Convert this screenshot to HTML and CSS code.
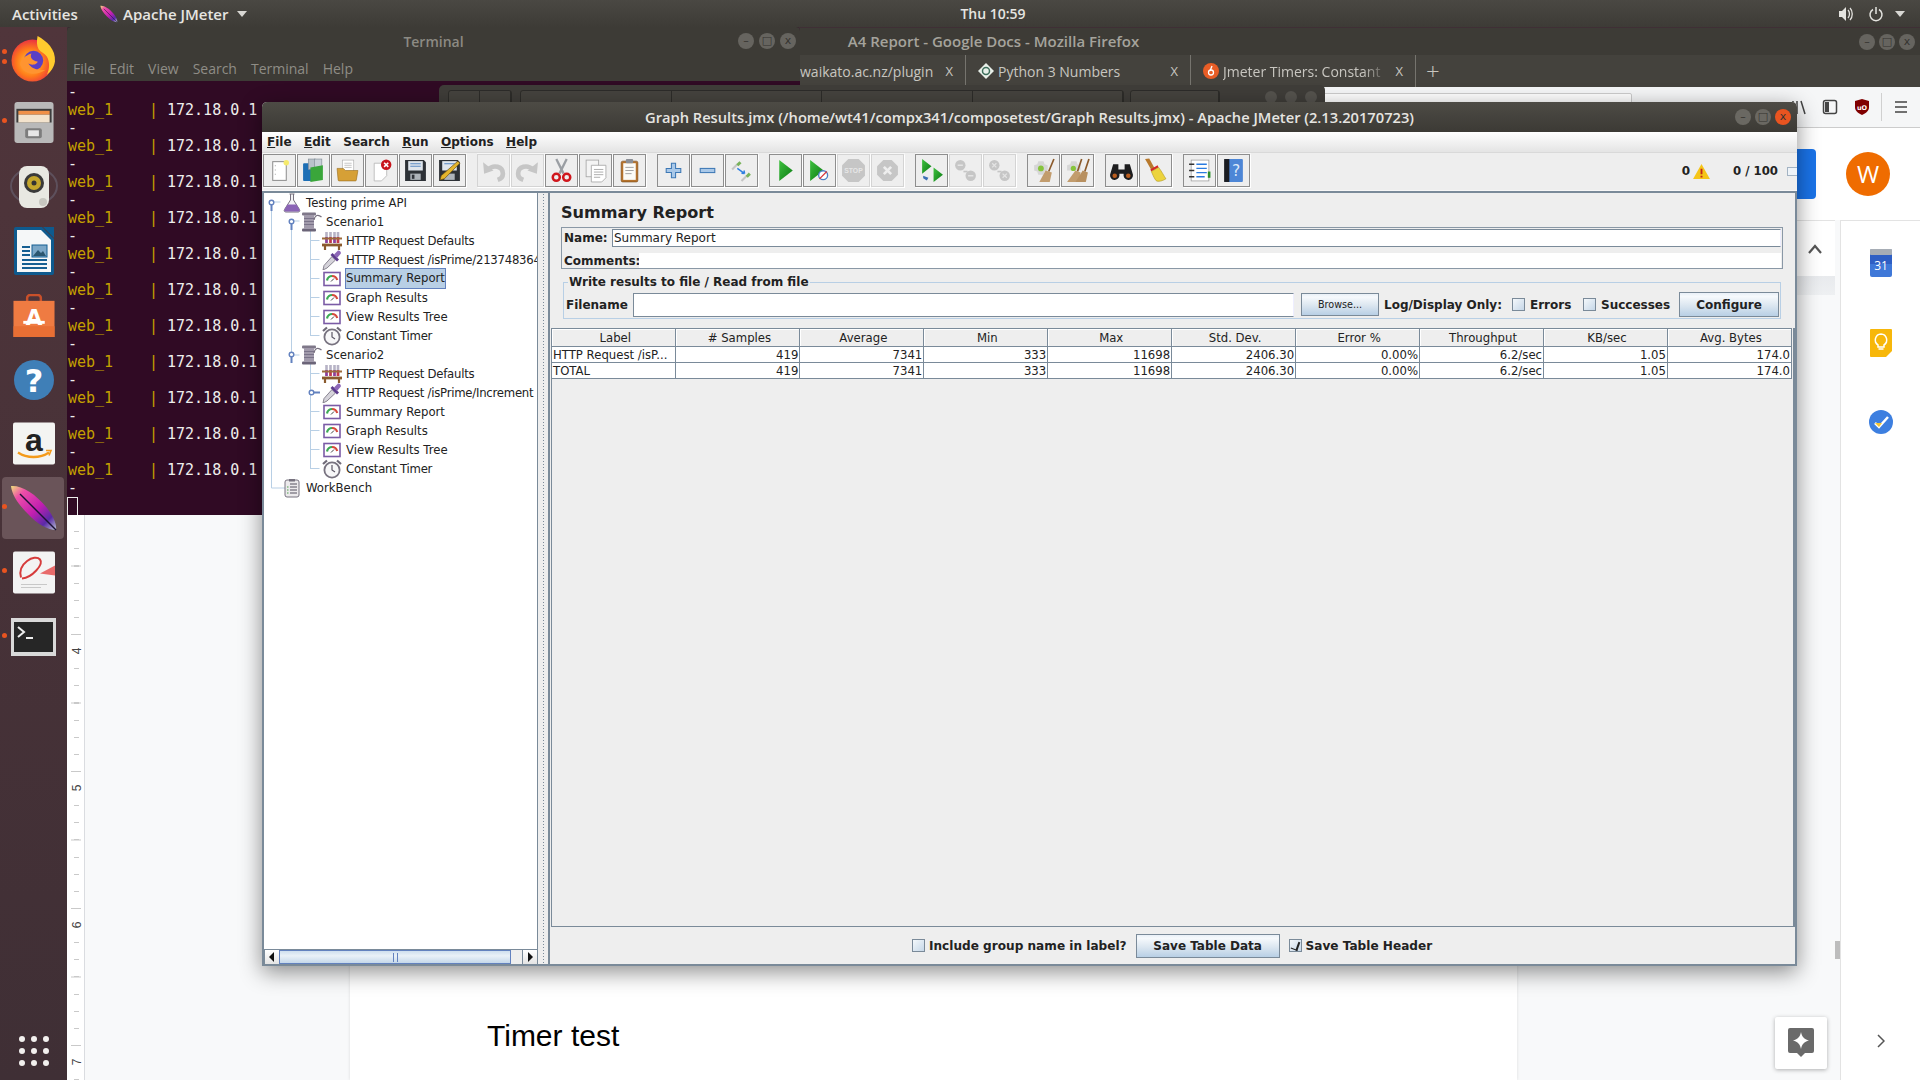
FILE: index.html
```html
<!DOCTYPE html>
<html lang="en">
<head>
  <meta charset="UTF-8" />
  <title>Graph Results.jmx - Apache JMeter</title>
  <link rel="stylesheet" href="styles.css">
</head>
<body>
  <svg class="defs" xmlns="http://www.w3.org/2000/svg">
    <defs>
      <linearGradient id="g-green" x1="0" y1="0" x2="1" y2="1"><stop offset="0" stop-color="#3fc13f"/><stop offset="1" stop-color="#0a7a12"/></linearGradient>
      <linearGradient id="g-feather" x1="0" y1="0" x2="1" y2="1"><stop offset="0" stop-color="#efe27a"/><stop offset=".2" stop-color="#ee4fa8"/><stop offset=".55" stop-color="#c21fb0"/><stop offset=".8" stop-color="#5a2aa8"/><stop offset="1" stop-color="#b9c3cf"/></linearGradient>
      <radialGradient id="g-fox" cx=".45" cy=".55" r=".6"><stop offset="0" stop-color="#ffd23a"/><stop offset=".55" stop-color="#ff7a1a"/><stop offset="1" stop-color="#e5234a"/></radialGradient>

      <symbol id="feather" viewBox="0 0 48 48">
        <path d="M1 2C11 1 25 9 37 24C43 32 47 40 46 46C38 46 27 40 18 30C8 20 2 11 1 2Z" fill="url(#g-feather)"/>
        <path d="M10 10L46 46" stroke="#1a1033" stroke-width="1.4"/>
      </symbol>

      <symbol id="tr-flask" viewBox="0 0 20 20">
        <path d="M7.500 1h5M8.500 1v6L2.500 16.500c-.8 1.500 0 2.500 1.500 2.500h12c1.500 0 2.300-1 1.500-2.500L11.500 7V1" fill="#f3f3f5" stroke="#77727f" stroke-width="1"/>
        <path d="M5.500 11.500h9L17.500 16.600c.6 1.200 0 2-1.200 2H3.700c-1.200 0-1.800-.8-1.200-2Z" fill="#8a63b5"/>
      </symbol>
      <symbol id="tr-spool" viewBox="0 0 20 20">
        <rect x="0" y="0.500" width="14" height="3" rx="1" fill="#7f7889"/>
        <rect x="0" y="16.500" width="14" height="3" rx="1" fill="#6b6478"/>
        <rect x="2" y="3" width="10" height="14" fill="#a19aab"/>
        <path d="M2 6.500h10M2 9.500h10M2 12.500h10" stroke="#7a7389" stroke-width="1"/>
        <path d="M12 8C13 3 16 2 19.500 5" fill="none" stroke="#77707f" stroke-width="1.200"/>
      </symbol>
      <symbol id="tr-rack" viewBox="0 0 20 20">
        <path d="M4.500 1v11M8.500 1v11M12.500 1v11M16 1v11" stroke="#b7b3c6" stroke-width="2.600"/>
        <path d="M4.500 6v6M12.500 6v6" stroke="#8e3f9e" stroke-width="2.600"/>
        <path d="M8.500 6v6M16 6v6" stroke="#c5384a" stroke-width="2.600"/>
        <path d="M0 7.500h20" stroke="#9c6b3c" stroke-width="2"/>
        <path d="M0 14h20" stroke="#8a5a2e" stroke-width="2.800"/>
        <path d="M3 14v5M17 14v5" stroke="#8a5a2e" stroke-width="2.200"/>
      </symbol>
      <symbol id="tr-pipette" viewBox="0 0 20 20">
        <path d="M1 20l1-4.500 8-9 3.500 3.500-8.500 8Z" fill="#d5d3da" stroke="#6f6a78" stroke-width=".8"/>
        <path d="M8.500 5l6.500 6.500 2-2L10.500 3Z" fill="#5d3b8c"/>
        <path d="M12 4.500l3.500-3.500c1.500-1.500 4.500 1.500 3 3L15 8Z" fill="#8e68b8"/>
      </symbol>
      <symbol id="tr-gauge" viewBox="0 0 20 20">
        <rect x="2" y="3.500" width="16" height="13" fill="#fff" stroke="#7b5ba6" stroke-width="1.600"/>
        <path d="M5 11.500C5.500 8.500 8 7 10 7" fill="none" stroke="#3caa55" stroke-width="2.200"/>
        <path d="M10 7C13 7 14.500 8.500 15.200 11" fill="none" stroke="#d6493a" stroke-width="2.200"/>
        <path d="M9 12.500L12 9.500" stroke="#444" stroke-width="1"/>
      </symbol>
      <symbol id="tr-clock" viewBox="0 0 20 20">
        <path d="M1 5l4-3.500M19 5l-4-3.500" stroke="#6f6a78" stroke-width="2.200"/>
        <circle cx="10" cy="11" r="7.600" fill="#f7f7f8" stroke="#77727f" stroke-width="1.800"/>
        <path d="M10 6v5l3 2" fill="none" stroke="#5c5766" stroke-width="1.200"/>
      </symbol>
      <symbol id="tr-bench" viewBox="0 0 20 20">
        <rect x="3" y="2" width="14" height="17" rx="2" fill="#eceaec" stroke="#77727f" stroke-width="1"/>
        <rect x="7" y="1" width="6" height="2.500" fill="#77727f"/>
        <path d="M8 6h7M8 9h7M8 12h7M8 15h7" stroke="#55505f" stroke-width="1"/>
        <path d="M5 9h1.500M5 12h1.500M5 15h1.500" stroke="#4aa04a" stroke-width="1.200"/>
      </symbol>

      <symbol id="t-new" viewBox="0 0 24 24">
        <rect x="5.500" y="3.500" width="13" height="18" fill="#fff" stroke="#8f8f8f"/>
        <path d="M8 7v1M8 11v1M8 15v1" stroke="#aaa"/>
        <circle cx="18.500" cy="4.500" r="2.600" fill="#f5ea6b"/>
      </symbol>
      <symbol id="t-books" viewBox="0 0 24 24">
        <rect x="2" y="5" width="8" height="17" rx="1" fill="#1d6fb5"/>
        <rect x="7" y="1" width="7" height="10" fill="#b9c2c9" stroke="#7f8a94" stroke-width=".6"/>
        <rect x="13" y="1" width="7" height="10" fill="#c8d0d6" stroke="#7f8a94" stroke-width=".6"/>
        <path d="M9 9l12-2v14l-12 2Z" fill="#3aa63a"/>
      </symbol>
      <symbol id="t-folder" viewBox="0 0 24 24">
        <rect x="7" y="2" width="11" height="13" fill="#fff" stroke="#aaa" stroke-width=".6"/>
        <path d="M9 5h7M9 7h7M9 9h7" stroke="#bbb" stroke-width=".8"/>
        <path d="M2 10h6l2 2h12l-1.500 9a1 1 0 0 1-1 1H4a1 1 0 0 1-1-1Z" fill="#d6a036" stroke="#9a6e1f" stroke-width=".6"/>
      </symbol>
      <symbol id="t-close" viewBox="0 0 24 24">
        <path d="M5 5h12v12l-5 5H5Z" fill="#fff" stroke="#b5b5b5" stroke-width=".8"/>
        <circle cx="16.500" cy="6.500" r="5" fill="#c8151b"/>
        <path d="M14.500 4.500l4 4M18.500 4.500l-4 4" stroke="#fff" stroke-width="1.500"/>
      </symbol>
      <symbol id="t-save" viewBox="0 0 24 24">
        <path d="M2 2h18l2 2v18H2Z" fill="#2d3136"/>
        <rect x="5" y="3" width="14" height="9" fill="#dfe5ec"/>
        <path d="M7 5.500h10M7 8h10" stroke="#5b8ac2" stroke-width="1"/>
        <rect x="7" y="15" width="10" height="6" fill="#aeb4ba"/>
        <rect x="8.500" y="16" width="2.500" height="4" fill="#30343a"/>
      </symbol>
      <symbol id="t-saveas" viewBox="0 0 24 24">
        <path d="M2 2h18l2 2v18H2Z" fill="#2d3136"/>
        <rect x="5" y="3" width="14" height="9" fill="#dfe5ec"/>
        <path d="M7 5.500h10" stroke="#5b8ac2" stroke-width="1"/>
        <rect x="7" y="15" width="10" height="6" fill="#aeb4ba"/>
        <path d="M20 3l2 2L7 20l-4 1 1-4Z" fill="#e4b52c" stroke="#6e5413" stroke-width=".7"/>
      </symbol>
      <symbol id="t-undo" viewBox="0 0 24 24">
        <path d="M7 11c5-5 14-3 14 4 0 3-2 5-5 6" fill="none" stroke="#c6c6c6" stroke-width="4.500"/>
        <path d="M2 4l1 11 9-3Z" fill="#c6c6c6"/>
      </symbol>
      <symbol id="t-redo" viewBox="0 0 24 24">
        <path d="M17 11c-5-5-14-3-14 4 0 3 2 5 5 6" fill="none" stroke="#c6c6c6" stroke-width="4.500"/>
        <path d="M22 4l-1 11-9-3Z" fill="#c6c6c6"/>
      </symbol>
      <symbol id="t-cut" viewBox="0 0 24 24">
        <path d="M7 1l7 14M17 1l-7 14" stroke="#9a9ea3" stroke-width="2.200"/>
        <circle cx="7" cy="18.500" r="3.400" fill="none" stroke="#d0161c" stroke-width="2.400"/>
        <circle cx="17" cy="18.500" r="3.400" fill="none" stroke="#d0161c" stroke-width="2.400"/>
      </symbol>
      <symbol id="t-copy" viewBox="0 0 24 24">
        <rect x="3" y="2" width="12" height="16" fill="#f4f4f4" stroke="#a5a5a5" stroke-width=".8"/>
        <path d="M8 7h14v12l-4 4H8Z" fill="#fff" stroke="#a5a5a5" stroke-width=".8"/>
        <path d="M10.500 11h9M10.500 13.500h9M10.500 16h9M10.500 18.500h6" stroke="#a8a8a8" stroke-width=".9"/>
      </symbol>
      <symbol id="t-paste" viewBox="0 0 24 24">
        <rect x="4" y="3" width="16" height="20" rx="1.500" fill="#b5732c" stroke="#7a4a18" stroke-width=".6"/>
        <rect x="6" y="5" width="12" height="16" fill="#fbfbf7"/>
        <rect x="8.500" y="1" width="7" height="4" rx="1" fill="#8b8f96"/>
        <path d="M8 9h8M8 12h8M8 15h6" stroke="#9d9d9d" stroke-width=".9"/>
      </symbol>
      <symbol id="t-plus" viewBox="0 0 24 24">
        <path d="M10 5h4v5h5v4h-5v5h-4v-5H5v-4h5Z" fill="#a9c8e8" stroke="#3d78b5" stroke-width="1"/>
      </symbol>
      <symbol id="t-minus" viewBox="0 0 24 24">
        <rect x="5" y="10" width="14" height="4" fill="#a9c8e8" stroke="#3d78b5" stroke-width="1"/>
      </symbol>
      <symbol id="t-toggle" viewBox="0 0 24 24">
        <path d="M3 11l5-5" stroke="#c5c5c5" stroke-width="2"/>
        <path d="M7 6l3-3 2 2-3 3Z" fill="#79b25b"/>
        <path d="M12 22l5-5" stroke="#c5c5c5" stroke-width="2"/>
        <path d="M16 17l3-3 2 2-3 3Z" fill="#79b25b"/>
        <path d="M8 10l7 5M15 15l-3-.4M15 15l-.6-3" fill="none" stroke="#2f7fe0" stroke-width="1.400"/>
      </symbol>
      <symbol id="t-play" viewBox="0 0 24 24">
        <path d="M6 2l13 10L6 22Z" fill="url(#g-green)"/>
      </symbol>
      <symbol id="t-playno" viewBox="0 0 24 24">
        <path d="M3 2l13 10L3 22Z" fill="url(#g-green)"/>
        <circle cx="15.500" cy="16.500" r="4.300" fill="#fff" stroke="#4c7fc4" stroke-width="1.300"/>
        <path d="M12 20l7-7" stroke="#d8353a" stroke-width="1.200"/>
      </symbol>
      <symbol id="t-stop" viewBox="0 0 24 24">
        <path d="M7 1h10l6 6v10l-6 6H7l-6-6V7Z" fill="#c6c6c6"/>
        <text x="12" y="14.500" class="stop-word">STOP</text>
      </symbol>
      <symbol id="t-shut" viewBox="0 0 24 24">
        <path d="M8 2h8l6 6v8l-6 6H8l-6-6V8Z" fill="#c6c6c6"/>
        <path d="M8.500 8.500l7 7M15.500 8.500l-7 7" stroke="#eee" stroke-width="2.600"/>
      </symbol>
      <symbol id="t-remote" viewBox="0 0 24 24">
        <path d="M3 1l9 7-9 7Z" fill="url(#g-green)"/>
        <path d="M14 9l9 7-9 7Z" fill="url(#g-green)"/>
        <path d="M4 17l5 2-1.500 2.500L4 19.500Z" fill="#3d6fb5"/>
      </symbol>
      <symbol id="t-rstop" viewBox="0 0 24 24">
        <circle cx="7" cy="7" r="5" fill="#c6c6c6"/>
        <circle cx="17" cy="17" r="5" fill="#c6c6c6"/>
        <path d="M10 13h4" stroke="#c6c6c6" stroke-width="1.600"/>
        <path d="M4.500 7h5M14.500 17h5" stroke="#e4e4e4" stroke-width="1.400"/>
      </symbol>
      <symbol id="t-rshut" viewBox="0 0 24 24">
        <circle cx="7" cy="7" r="5" fill="#c6c6c6"/>
        <circle cx="17" cy="17" r="5" fill="#c6c6c6"/>
        <path d="M10 13h4" stroke="#c6c6c6" stroke-width="1.600"/>
        <path d="M5 5l4 4M9 5l-4 4M15 15l4 4M19 15l-4 4" stroke="#e4e4e4" stroke-width="1.200"/>
      </symbol>
      <symbol id="t-clear" viewBox="0 0 24 24">
        <path d="M3 7l3-1 1-3h5l1 3 3 1v5l-3 1-1 3H7l-1-3-3-1Z" fill="#d6d6d6"/>
        <circle cx="9.500" cy="10" r="2.800" fill="#86c43c"/>
        <path d="M22 1l-5 12" stroke="#8b5a2b" stroke-width="1.600"/>
        <path d="M14 12l6 2-2 9H8Z" fill="#c29c6d"/>
      </symbol>
      <symbol id="t-clearall" viewBox="0 0 24 24">
        <path d="M2 7l3-1 1-3h5l1 3 3 1v5H2Z" fill="#d6d6d6"/>
        <circle cx="8" cy="10" r="2.500" fill="#86c43c"/>
        <path d="M16 1l-4 12M23 1l-4 12" stroke="#8b5a2b" stroke-width="1.600"/>
        <path d="M10 12l5 2-2 9H2Z" fill="#c29c6d"/>
        <path d="M17 12l5 2-2 9H10Z" fill="#b89060"/>
      </symbol>
      <symbol id="t-bino" viewBox="0 0 24 24">
        <path d="M4 6h5v5h6V6h5l3 10a4.500 4.500 0 1 1-9 1v-2h-4v2a4.500 4.500 0 1 1-9-1Z" fill="#1d1d1f"/>
        <circle cx="5.500" cy="17" r="2.200" fill="#b85c1e"/>
        <circle cx="18.500" cy="17" r="2.200" fill="#b85c1e"/>
      </symbol>
      <symbol id="t-broom" viewBox="0 0 24 24">
        <path d="M2 1l4-.5 5 9-3 2Z" fill="#b8792c"/>
        <path d="M7 11l7-4 1 2-7 4Z" fill="#d6252a"/>
        <path d="M8 13l7-4c3 4 5 8 7 11-5 3-9 3-10 1-2-3-3-6-4-8Z" fill="#ecd33d" stroke="#b39a1c" stroke-width=".6"/>
      </symbol>
      <symbol id="t-func" viewBox="0 0 24 24">
        <rect x="4" y="2" width="17" height="20" fill="#fff" stroke="#9a9a9a" stroke-width=".7"/>
        <path d="M9 6h10M9 10h10M9 14h10M9 18h8" stroke="#2a7be0" stroke-width="1.300"/>
        <path d="M2 6h5M2 12h5M2 18h5" stroke="#333" stroke-width="1.600"/>
        <rect x="20" y="13" width="2.500" height="6" fill="#2d8f2d"/>
      </symbol>
      <symbol id="t-help" viewBox="0 0 24 24">
        <rect x="4" y="1" width="17" height="22" rx="1" fill="#4d86d6"/>
        <rect x="3" y="1" width="5" height="22" fill="#1b1d22"/>
        <text x="14.500" y="17" class="help-mark">?</text>
      </symbol>

      <symbol id="d-firefox" viewBox="0 0 44 46">
        <circle cx="21" cy="25" r="20.500" fill="url(#g-fox)"/>
        <path d="M26 1c9 5 18 13 17 25-1 6-4 10-8 13 3-6 3-13 0-18-2-3-6-4-8-7-2-4-2-8-1-13Z" fill="#ffcb2e"/>
        <circle cx="22" cy="25" r="9.500" fill="#5b3fc4"/>
        <path d="M9 29c3 9 15 12 25 5-8 1-14-1-17-6 3 2 9 1 9-2-5-1-8-4-6-8-6 2-11 6-11 11Z" fill="#ff9430"/>
      </symbol>
      <symbol id="d-files" viewBox="0 0 42 44">
        <rect x="1" y="1" width="40" height="42" rx="3" fill="#b9b9b9"/>
        <rect x="3" y="8" width="36" height="14" fill="#3c3c3c"/>
        <rect x="5" y="10" width="32" height="4" fill="#f09048"/>
        <rect x="5" y="14" width="32" height="8" fill="#f3e3cd"/>
        <rect x="12" y="28" width="17" height="10" rx="2" fill="#7d7d7d"/>
        <rect x="15" y="30" width="11" height="6" fill="#e7e7e7"/>
      </symbol>
      <symbol id="d-speaker" viewBox="0 0 48 44">
        <ellipse cx="24" cy="21" rx="23" ry="18" fill="none" stroke="#6d6b7d" stroke-width="2" stroke-opacity=".5"/>
        <rect x="9" y="1" width="30" height="42" rx="8" fill="#e8e8e2"/>
        <circle cx="24" cy="18" r="10" fill="#3a3a3a"/>
        <circle cx="24" cy="18" r="7" fill="#c4a62c"/>
        <circle cx="24" cy="18" r="2.500" fill="#333"/>
        <circle cx="33" cy="37" r="4" fill="#c7c7c0"/>
      </symbol>
      <symbol id="d-writer" viewBox="0 0 40 48">
        <path d="M2 0h26l12 12v34a2 2 0 0 1-2 2H2a2 2 0 0 1-2-2V2a2 2 0 0 1 2-2Z" fill="#0e5a8e"/>
        <path d="M3 3h24l10 10v32H3Z" fill="#f5f7f8"/>
        <path d="M29 0h11v11Z" fill="#0e5a8e"/>
        <path d="M8 20h8M8 24h8M8 28h8M8 33h25M8 37h25M8 41h25" stroke="#155f92" stroke-width="2"/>
        <rect x="18" y="18" width="15" height="12" fill="#7ba7c7" stroke="#155f92"/>
        <path d="M19 29l5-6 3 3 2-2 3 5Z" fill="#2b566f"/>
      </symbol>
      <symbol id="d-store" viewBox="0 0 42 44">
        <path d="M14 9V4a3 3 0 0 1 3-3h8a3 3 0 0 1 3 3v5" fill="none" stroke="#c9502a" stroke-width="2.500"/>
        <rect x="0" y="7" width="42" height="37" fill="#ef7b42"/>
        <rect x="0" y="33" width="42" height="11" fill="#e86f34"/>
        <text x="21" y="32" class="store-mark">A</text>
        <path d="M10 29h22" stroke="#fff" stroke-width="3"/>
      </symbol>
      <symbol id="d-help" viewBox="0 0 40 40">
        <circle cx="20" cy="20" r="20" fill="#3f7fb7"/>
        <text x="20" y="32" class="help-big">?</text>
      </symbol>
      <symbol id="d-amazon" viewBox="0 0 42 42">
        <rect x="0" y="0" width="42" height="42" rx="2" fill="#f4f4f2"/>
        <text x="21" y="28" class="amazon-mark">a</text>
        <path d="M5 30c9 6 22 6 31 0" fill="none" stroke="#f49a1a" stroke-width="2.400"/>
        <path d="M33 28l5 0-2 5" fill="none" stroke="#f49a1a" stroke-width="1.600"/>
      </symbol>
      <symbol id="d-evince" viewBox="0 0 42 42">
        <path d="M2 0h38a2 2 0 0 1 2 2v38a2 2 0 0 1-2 2H2a2 2 0 0 1-2-2V2a2 2 0 0 1 2-2Z" fill="#f3f3f3"/>
        <path d="M8 26C4 12 22 2 27 8c4 5-8 18-18 19" fill="none" stroke="#d63b3b" stroke-width="2"/>
        <path d="M27 22l15-8v10Z" fill="#e86a6a"/>
        <path d="M8 33h26M8 36h20" stroke="#c8c8c8" stroke-width="1.200"/>
      </symbol>
      <symbol id="d-term" viewBox="0 0 45 38">
        <rect x="0" y="0" width="45" height="38" fill="#d9d9d9"/>
        <rect x="3" y="4" width="39" height="30" fill="#262626"/>
        <path d="M7 9l6 5-6 5" fill="none" stroke="#eee" stroke-width="2"/>
        <path d="M15 20h7" stroke="#eee" stroke-width="2"/>
      </symbol>
    </defs>
  </svg>

  <div class="desktop">
    <header class="topbar">
      <div class="topbar-left">
        <span class="activities">Activities</span>
        <svg class="app-feather"><use href="#feather"/></svg>
        <span class="app-name">Apache JMeter</span>
        <span class="caret"></span>
      </div>
      <div class="clock">Thu 10:59</div>
      <div class="topbar-right">
        <svg class="tray-ico" viewBox="0 0 16 16"><path d="M1 5h3l4-4v14l-4-4H1Z" fill="#e4e3df"/><path d="M10 4c2 2 2 6 0 8M12 2c3 3 3 9 0 12" fill="none" stroke="#e4e3df" stroke-width="1.300"/></svg>
        <svg class="tray-ico" viewBox="0 0 16 16"><path d="M5 3.500a6 6 0 1 0 6 0M8 1v7" fill="none" stroke="#e4e3df" stroke-width="1.500"/></svg>
        <span class="caret caret-tray"></span>
      </div>
    </header>

    <nav class="dock">
      <div class="dock-slot"><i class="pip pip-two"></i><i class="pip"></i><svg class="ico-firefox"><use href="#d-firefox"/></svg></div>
      <div class="dock-slot"><i class="pip"></i><svg class="ico-42"><use href="#d-files"/></svg></div>
      <div class="dock-slot"><svg class="ico-speaker"><use href="#d-speaker"/></svg></div>
      <div class="dock-slot"><svg class="ico-writer"><use href="#d-writer"/></svg></div>
      <div class="dock-slot"><svg class="ico-42"><use href="#d-store"/></svg></div>
      <div class="dock-slot"><svg class="ico-help"><use href="#d-help"/></svg></div>
      <div class="dock-slot"><svg class="ico-42"><use href="#d-amazon"/></svg></div>
      <div class="dock-slot dock-slot-on"><i class="pip"></i><svg class="ico-jmeter"><use href="#feather"/></svg></div>
      <div class="dock-slot"><i class="pip"></i><svg class="ico-42"><use href="#d-evince"/></svg></div>
      <div class="dock-slot"><i class="pip"></i><svg class="ico-term"><use href="#d-term"/></svg></div>
      <div class="app-grid">
        <i></i><i></i><i></i><i></i><i></i><i></i><i></i><i></i><i></i>
      </div>
    </nav>

    <!-- firefox behind everything -->
    <section class="win firefox">
      <div class="ff-title">
        <span>A4 Report - Google Docs - Mozilla Firefox</span>
        <div class="win-btns win-btns-ff"><b>&#8211;</b><b>&#9633;</b><b>x</b></div>
      </div>
      <div class="ff-tabs">
        <div class="ff-tab"><span class="ff-tab-text ff-tab-first">waikato.ac.nz/plugin</span><em>X</em></div>
        <div class="ff-tab">
          <svg class="favicon" viewBox="0 0 16 16"><path d="M8 0l8 8-8 8-8-8Z" fill="#e8efe9"/><circle cx="8" cy="8" r="3.500" fill="none" stroke="#3d6e5b" stroke-width="1.500"/></svg>
          <span class="ff-tab-text">Python 3 Numbers</span><em>X</em>
        </div>
        <div class="ff-tab">
          <svg class="favicon" viewBox="0 0 16 16"><circle cx="8" cy="8" r="8" fill="#e85d26"/><circle cx="8" cy="9.500" r="2.500" fill="none" stroke="#fff" stroke-width="1.300"/><path d="M9 3L7 8" stroke="#fff" stroke-width="1.300"/></svg>
          <span class="ff-tab-text ff-tab-fade">Jmeter Timers: Constant</span><em>X</em>
        </div>
        <div class="ff-new">+</div>
      </div>
      <div class="ff-nav">
        <div class="ff-url"></div>
        <svg class="nav-lib" viewBox="0 0 16 16"><path d="M2 2v13M6 2v13M10 2l4 13" fill="none" stroke="#444" stroke-width="1.500"/></svg>
        <svg class="nav-side" viewBox="0 0 16 16"><rect x="1.500" y="1.500" width="13" height="13" rx="2" fill="none" stroke="#444" stroke-width="1.500"/><rect x="3" y="3" width="4" height="10" fill="#444"/></svg>
        <svg class="nav-shield" viewBox="0 0 16 16"><path d="M8 0l7 2v6c0 4-3 6-7 8-4-2-7-4-7-8V2Z" fill="#800000"/><text x="8" y="10.500" class="shield-mark">uO</text></svg>
        <i class="nav-divider"></i>
        <svg class="nav-menu" viewBox="0 0 16 16"><path d="M2 3h12M2 8h12M2 13h12" stroke="#444" stroke-width="1.700"/></svg>
      </div>
      <div class="docs-head">
        <div class="share-btn"></div>
        <div class="avatar">W</div>
      </div>
      <div class="docs-main">
        <div class="ruler">
          <span class="ruler-num ruler-4">4</span>
          <span class="ruler-num ruler-5">5</span>
          <span class="ruler-num ruler-6">6</span>
          <span class="ruler-num ruler-7">7</span>
        </div>
        <div class="docs-canvas">
          <div class="docs-bar">
            <svg class="docs-chevron" viewBox="0 0 16 10"><path d="M2 9l6-7 6 7" fill="none" stroke="#555" stroke-width="2.200"/></svg>
          </div>
          <div class="docs-strip"></div>
          <div class="docs-work">
            <div class="page"><p class="page-text">Timer test</p></div>
            <div class="explore">
              <svg viewBox="0 0 26 30"><path d="M0 2a2 2 0 0 1 2-2h22a2 2 0 0 1 2 2v21a2 2 0 0 1-2 2h-7l-4 4-4-4H2a2 2 0 0 1-2-2Z" fill="#6a6a6a"/><path d="M13 4c1 5 3 7 8 8.500-5 1.500-7 3.500-8 8.500-1-5-3-7-8-8.500 5-1.500 7-3.500 8-8.500Z" fill="#fff"/></svg>
            </div>
          </div>
        </div>
        <div class="docs-scroll"><i></i></div>
        <aside class="docs-side">
          <svg class="side-cal" viewBox="0 0 22 28"><rect x="0" y="0" width="22" height="28" rx="2" fill="#3f78d8"/><rect x="0" y="0" width="22" height="6" rx="1" fill="#a7adb5"/><rect x="0" y="6" width="22" height="9" fill="#2f5fc4"/><text x="11" y="21" class="cal-mark">31</text></svg>
          <svg class="side-keep" viewBox="0 0 22 28"><path d="M1 0h20a1 1 0 0 1 1 1v21l-6 6H1a1 1 0 0 1-1-1V1a1 1 0 0 1 1-1Z" fill="#f7b70a"/><path d="M11 5a6 6 0 0 1 3 11v2H8v-2A6 6 0 0 1 11 5ZM8.500 20h5" fill="none" stroke="#fff" stroke-width="1.500"/></svg>
          <svg class="side-tasks" viewBox="0 0 24 24"><circle cx="12" cy="12" r="12" fill="#3d7fe0"/><path d="M6 13l4 4 9-10" fill="none" stroke="#fff" stroke-width="2.500"/><path d="M6 13l4 4 3-4" fill="#f4c430"/></svg>
          <svg class="side-next" viewBox="0 0 8 14"><path d="M1 1l6 6-6 6" fill="none" stroke="#555" stroke-width="1.500"/></svg>
        </aside>
      </div>
    </section>

    <section class="win terminal">
      <div class="term-title">
        <span>Terminal</span>
        <div class="win-btns win-btns-term"><b>&#8211;</b><b>&#9633;</b><b>x</b></div>
      </div>
      <div class="term-menu"><span>File</span><span>Edit</span><span>View</span><span>Search</span><span>Terminal</span><span>Help</span></div>
      <div class="term-body">
        <div>-</div>
        <div class="t-line"><span class="t-svc">web_1</span><span class="t-bar">|</span><span>172.18.0.1</span></div>
        <div>-</div>
        <div class="t-line"><span class="t-svc">web_1</span><span class="t-bar">|</span><span>172.18.0.1</span></div>
        <div>-</div>
        <div class="t-line"><span class="t-svc">web_1</span><span class="t-bar">|</span><span>172.18.0.1</span></div>
        <div>-</div>
        <div class="t-line"><span class="t-svc">web_1</span><span class="t-bar">|</span><span>172.18.0.1</span></div>
        <div>-</div>
        <div class="t-line"><span class="t-svc">web_1</span><span class="t-bar">|</span><span>172.18.0.1</span></div>
        <div>-</div>
        <div class="t-line"><span class="t-svc">web_1</span><span class="t-bar">|</span><span>172.18.0.1</span></div>
        <div>-</div>
        <div class="t-line"><span class="t-svc">web_1</span><span class="t-bar">|</span><span>172.18.0.1</span></div>
        <div>-</div>
        <div class="t-line"><span class="t-svc">web_1</span><span class="t-bar">|</span><span>172.18.0.1</span></div>
        <div>-</div>
        <div class="t-line"><span class="t-svc">web_1</span><span class="t-bar">|</span><span>172.18.0.1</span></div>
        <div>-</div>
        <div class="t-line"><span class="t-svc">web_1</span><span class="t-bar">|</span><span>172.18.0.1</span></div>
        <div>-</div>
        <div class="t-line"><span class="t-svc">web_1</span><span class="t-bar">|</span><span>172.18.0.1</span></div>
        <div>-</div>
        <i class="t-cursor"></i>
      </div>
    </section>

    <section class="win darkwin">
      <div class="dark-group dark-g1"><i></i><i></i></div>
      <div class="dark-group dark-g2"><i></i><i></i><i></i><i></i></div>
      <div class="dark-group dark-g3"><i></i></div>
      <div class="dark-dots"><i></i><i></i><i></i></div>
    </section>

    <!-- jmeter window -->
    <section class="win jm">
      <div class="jm-title">
        <span>Graph Results.jmx (/home/wt41/compx341/composetest/Graph Results.jmx) - Apache JMeter (2.13.20170723)</span>
        <div class="win-btns win-btns-jm"><b>&#8211;</b><b>&#9633;</b><b class="is-close">x</b></div>
      </div>
      <div class="jm-menu">
        <span><u>F</u>ile</span><span><u>E</u>dit</span><span>Search</span><span><u>R</u>un</span><span><u>O</u>ptions</span><span><u>H</u>elp</span>
      </div>
      <div class="jm-tools">
        <div class="tgroup">
          <button class="tbtn"><svg><use href="#t-new"/></svg></button>
          <button class="tbtn"><svg><use href="#t-books"/></svg></button>
          <button class="tbtn"><svg><use href="#t-folder"/></svg></button>
          <button class="tbtn"><svg><use href="#t-close"/></svg></button>
          <button class="tbtn"><svg><use href="#t-save"/></svg></button>
          <button class="tbtn"><svg><use href="#t-saveas"/></svg></button>
        </div>
        <div class="tgroup">
          <button class="tbtn off"><svg><use href="#t-undo"/></svg></button>
          <button class="tbtn off"><svg><use href="#t-redo"/></svg></button>
          <button class="tbtn"><svg><use href="#t-cut"/></svg></button>
          <button class="tbtn"><svg><use href="#t-copy"/></svg></button>
          <button class="tbtn"><svg><use href="#t-paste"/></svg></button>
        </div>
        <div class="tgroup">
          <button class="tbtn"><svg><use href="#t-plus"/></svg></button>
          <button class="tbtn"><svg><use href="#t-minus"/></svg></button>
          <button class="tbtn"><svg><use href="#t-toggle"/></svg></button>
        </div>
        <div class="tgroup">
          <button class="tbtn"><svg><use href="#t-play"/></svg></button>
          <button class="tbtn"><svg><use href="#t-playno"/></svg></button>
          <button class="tbtn off"><svg><use href="#t-stop"/></svg></button>
          <button class="tbtn off"><svg><use href="#t-shut"/></svg></button>
        </div>
        <div class="tgroup">
          <button class="tbtn"><svg><use href="#t-remote"/></svg></button>
          <button class="tbtn off"><svg><use href="#t-rstop"/></svg></button>
          <button class="tbtn off"><svg><use href="#t-rshut"/></svg></button>
        </div>
        <div class="tgroup">
          <button class="tbtn"><svg><use href="#t-clear"/></svg></button>
          <button class="tbtn"><svg><use href="#t-clearall"/></svg></button>
        </div>
        <div class="tgroup">
          <button class="tbtn"><svg><use href="#t-bino"/></svg></button>
          <button class="tbtn"><svg><use href="#t-broom"/></svg></button>
        </div>
        <div class="tgroup">
          <button class="tbtn"><svg><use href="#t-func"/></svg></button>
          <button class="tbtn"><svg><use href="#t-help"/></svg></button>
        </div>
        <div class="jm-status">
          <span>0</span>
          <svg class="warn" viewBox="0 0 18 16"><path d="M9 0l9 16H0Z" fill="#f5c518"/><path d="M9 5v6M9 12.500v2" stroke="#c3261a" stroke-width="2"/></svg>
          <span class="thread-count">0 / 100</span>
          <i class="thread-box"></i>
        </div>
      </div>

      <div class="jm-split">
        <div class="tree-pane">
          <div class="tree">
            <svg class="tree-lines" viewBox="0 0 60 300" width="60" height="300">
              <g stroke="#b8cfe5" fill="none">
                <path d="M7.500 9v286h14M7.500 9h9"/>
                <path d="M27.500 28v134M27.500 28h8M27.500 162h8"/>
                <path d="M46.500 38v105M46.500 47.500h9M46.500 66.500h9M46.500 85.500h9M46.500 104.500h9M46.500 123.500h9M46.500 142.500h9"/>
                <path d="M46.500 171v105M46.500 180.500h9M46.500 218.500h9M46.500 237.500h9M46.500 256.500h9M46.500 275.500h9"/>
              </g>
              <g fill="#fff" stroke="#6382bf" stroke-width="1.400">
                <path d="M7.500 12v6M27.500 31v6M27.500 164v6M50 199.500h6" fill="none" stroke-width="2"/>
                <circle cx="7.500" cy="9.500" r="2.300"/>
                <circle cx="27.500" cy="28.500" r="2.300"/>
                <circle cx="27.500" cy="161.500" r="2.300"/>
                <circle cx="47.500" cy="199.500" r="2.300"/>
              </g>
            </svg>
            <div class="node lv1"><svg><use href="#tr-flask"/></svg><span>Testing prime API</span></div>
            <div class="node lv2"><svg><use href="#tr-spool"/></svg><span>Scenario1</span></div>
            <div class="node lv3"><svg><use href="#tr-rack"/></svg><span class="tight">HTTP Request Defaults</span></div>
            <div class="node lv3"><svg><use href="#tr-pipette"/></svg><span class="tight">HTTP Request /isPrime/2137483647</span></div>
            <div class="node lv3"><svg><use href="#tr-gauge"/></svg><span class="is-sel">Summary Report</span></div>
            <div class="node lv3"><svg><use href="#tr-gauge"/></svg><span>Graph Results</span></div>
            <div class="node lv3"><svg><use href="#tr-gauge"/></svg><span>View Results Tree</span></div>
            <div class="node lv3"><svg><use href="#tr-clock"/></svg><span class="tight">Constant Timer</span></div>
            <div class="node lv2"><svg><use href="#tr-spool"/></svg><span>Scenario2</span></div>
            <div class="node lv3"><svg><use href="#tr-rack"/></svg><span class="tight">HTTP Request Defaults</span></div>
            <div class="node lv3"><svg><use href="#tr-pipette"/></svg><span class="tight">HTTP Request /isPrime/Increment</span></div>
            <div class="node lv3"><svg><use href="#tr-gauge"/></svg><span>Summary Report</span></div>
            <div class="node lv3"><svg><use href="#tr-gauge"/></svg><span>Graph Results</span></div>
            <div class="node lv3"><svg><use href="#tr-gauge"/></svg><span>View Results Tree</span></div>
            <div class="node lv3"><svg><use href="#tr-clock"/></svg><span class="tight">Constant Timer</span></div>
            <div class="node lv1"><svg><use href="#tr-bench"/></svg><span>WorkBench</span></div>
          </div>
          <div class="hscroll">
            <div class="hs-btn"><svg viewBox="0 0 8 12"><path d="M6 1L1 6l5 5Z" fill="#111"/></svg></div>
            <div class="hs-thumb"><i></i></div>
            <div class="hs-track"></div>
            <div class="hs-btn"><svg viewBox="0 0 8 12"><path d="M2 1l5 5-5 5Z" fill="#111"/></svg></div>
          </div>
        </div>
        <div class="split-bar"></div>
        <div class="report">
          <h2 class="report-title">Summary Report</h2>
          <div class="namebox">
            <div class="name-row">
              <label class="lbl">Name:</label>
              <div class="field field-name">Summary Report</div>
            </div>
            <div class="name-row comments-row">
              <label class="lbl">Comments:</label>
              <div class="field-plain"></div>
            </div>
          </div>
          <fieldset class="fileset">
            <legend>Write results to file / Read from file</legend>
            <div class="file-row">
              <label class="lbl">Filename</label>
              <div class="field field-file"></div>
              <button class="jbtn jbtn-browse">Browse...</button>
              <span class="lbl log-label">Log/Display Only:</span>
              <span class="check-wrap errors-wrap"><i class="check"></i><span class="lbl">Errors</span></span>
              <span class="check-wrap"><i class="check"></i><span class="lbl">Successes</span></span>
              <button class="jbtn jbtn-config">Configure</button>
            </div>
          </fieldset>
          <div class="table-wrap">
            <table class="results">
              <thead>
                <tr><th>Label</th><th># Samples</th><th>Average</th><th>Min</th><th>Max</th><th>Std. Dev.</th><th>Error %</th><th>Throughput</th><th>KB/sec</th><th>Avg. Bytes</th></tr>
              </thead>
              <tbody>
                <tr><td>HTTP Request /isP...</td><td>419</td><td>7341</td><td>333</td><td>11698</td><td>2406.30</td><td>0.00%</td><td>6.2/sec</td><td>1.05</td><td>174.0</td></tr>
                <tr><td>TOTAL</td><td>419</td><td>7341</td><td>333</td><td>11698</td><td>2406.30</td><td>0.00%</td><td>6.2/sec</td><td>1.05</td><td>174.0</td></tr>
              </tbody>
            </table>
          </div>
          <div class="report-foot">
            <i class="check"></i><span class="lbl foot-label">Include group name in label?</span>
            <button class="jbtn jbtn-save">Save Table Data</button>
            <i class="check check-on"></i><span class="lbl foot-label">Save Table Header</span>
          </div>
        </div>
      </div>
    </section>
  </div>
</body>
</html>
```

FILE: styles.css
```css
* {
  box-sizing: border-box;
}
html, body {
  margin: 0;
  height: 100%;
  overflow: hidden;
}
body {
  font-family: "DejaVu Sans", sans-serif;
  background: #3f2f35;
}
.defs {
  position: absolute;
  width: 0;
  height: 0;
}
.stop-word {
  font: bold 6.5px "Liberation Sans", sans-serif;
  fill: #e6e6e6;
  text-anchor: middle;
}
.help-mark {
  font: 15px "DejaVu Sans", sans-serif;
  fill: #dce9fa;
  text-anchor: middle;
}
.store-mark {
  font: bold 22px "DejaVu Sans", sans-serif;
  fill: #fff;
  text-anchor: middle;
}
.help-big {
  font: bold 32px "DejaVu Sans", sans-serif;
  fill: #fff;
  text-anchor: middle;
}
.amazon-mark {
  font: bold 32px "Liberation Sans", sans-serif;
  fill: #222;
  text-anchor: middle;
}
.shield-mark {
  font: bold 6.5px "DejaVu Sans", sans-serif;
  fill: #fff;
  text-anchor: middle;
}
.cal-mark {
  font: 12px "Open Sans", sans-serif;
  fill: #fff;
  text-anchor: middle;
}

.desktop {
  position: relative;
  width: 1920px;
  height: 1080px;
  overflow: hidden;
  display: grid;
  grid-template-columns: 67px 1fr;
  grid-template-rows: 27px 1fr;
}

/* gnome top bar */
.topbar {
  grid-column: 1 / 3;
  position: relative;
  z-index: 9;
  display: flex;
  align-items: center;
  justify-content: space-between;
  background: linear-gradient(#4a4843, #3d3b36);
  color: #e6e5e1;
  font-family: "Open Sans", sans-serif;
  font-size: 14px;
  font-weight: 600;
}
.topbar-left {
  display: flex;
  align-items: center;
  padding-left: 12px;
  font-size: 15px;
}
.activities {
  width: 87px;
}
.app-feather {
  width: 18px;
  height: 20px;
  margin: 0 5px 0 1px;
}
.app-name {
  width: 114px;
}
.caret {
  display: inline-block;
  border-left: 5px solid transparent;
  border-right: 5px solid transparent;
  border-top: 6px solid #d8d7d3;
}
.clock {
  position: absolute;
  left: 960px;
  width: 66px;
  text-align: center;
}
.topbar-right {
  display: flex;
  align-items: center;
  gap: 14px;
  padding-right: 15px;
}
.caret-tray {
  margin-left: -3px;
}
.tray-ico {
  width: 16px;
  height: 16px;
}

/* dock */
.dock {
  position: relative;
  z-index: 8;
  display: flex;
  flex-direction: column;
  align-items: center;
  background: linear-gradient(#50353b, #3f2f35);
}
.dock-slot {
  position: relative;
  flex: none;
  width: 67px;
  height: 64.3px;
  display: flex;
  align-items: center;
  justify-content: center;
}
.dock-slot:first-child {
  margin-top: -1px;
}
.dock-slot-on::before {
  content: "";
  position: absolute;
  left: 2px;
  right: 3px;
  top: 1px;
  bottom: 1px;
  border-radius: 4px;
  background: #6a5459;
}
.dock-slot svg {
  position: relative;
}
.pip {
  position: absolute;
  left: 2px;
  top: 28px;
  width: 5px;
  height: 5px;
  border-radius: 50%;
  background: #e95420;
}
.pip-two {
  top: 23px;
}
.pip-two + .pip {
  top: 33px;
}
.ico-firefox {
  width: 45px;
  height: 47px;
}
.ico-42 {
  width: 42px;
  height: 43px;
}
.ico-speaker {
  width: 48px;
  height: 44px;
}
.ico-writer {
  width: 40px;
  height: 48px;
}
.ico-help {
  width: 40px;
  height: 40px;
}
.ico-jmeter {
  width: 48px;
  height: 48px;
}
.ico-term {
  width: 45px;
  height: 38px;
}
.app-grid {
  margin-top: auto;
  margin-bottom: 14px;
  display: grid;
  grid-template-columns: repeat(3, 6px);
  gap: 6px;
}
.app-grid i {
  width: 6px;
  height: 6px;
  border-radius: 50%;
  background: #f2f0ee;
}

/* windows on the desktop */
.win {
  position: absolute;
}
.win-btns {
  position: absolute;
  display: flex;
  top: 50%;
  transform: translateY(-50%);
}
.win-btns b {
  width: 16px;
  height: 16px;
  border-radius: 50%;
  background: #66645f;
  color: #35332f;
  font: 11px/15px "DejaVu Sans", sans-serif;
  text-align: center;
}

/* firefox */
.firefox {
  left: 67px;
  top: 28px;
  width: 1853px;
  height: 1052px;
  display: flex;
  flex-direction: column;
  background: #fff;
}
.ff-title {
  position: relative;
  flex: none;
  height: 27px;
  background: #3d3b36;
  color: #a5a39c;
  font: 600 15px/27px "Open Sans", sans-serif;
  text-align: center;
}
.win-btns-ff {
  right: 5px;
  gap: 4px;
}
.ff-tabs {
  flex: none;
  height: 32px;
  display: flex;
  align-items: center;
  padding-left: 674px;
  background: #44423d;
  color: #c8c6c0;
  font: 14px "Open Sans", sans-serif;
}
.ff-tab {
  width: 225px;
  height: 100%;
  display: flex;
  align-items: center;
  padding: 0 12px;
  border-right: 1px solid #76746e;
}
.favicon {
  flex: none;
  width: 16px;
  height: 16px;
  margin-right: 4px;
}
.ff-tab-text {
  width: 165px;
  white-space: nowrap;
  overflow: hidden;
}
.ff-tab-first {
  width: 185px;
  padding-left: 47px;
}
.ff-tab-fade {
  -webkit-mask-image: linear-gradient(90deg, #000 85%, transparent);
  mask-image: linear-gradient(90deg, #000 85%, transparent);
}
.ff-tab em {
  margin-left: auto;
  font-style: normal;
  font-size: 13px;
}
.ff-new {
  margin-left: 10px;
  font-size: 24px;
  font-weight: 300;
  line-height: 30px;
}
.ff-nav {
  position: relative;
  flex: none;
  height: 41px;
  background: #f5f6f7;
  border-bottom: 1px solid #ccc;
}
.ff-nav > * {
  position: absolute;
}
.ff-url {
  left: 560px;
  top: 6px;
  width: 1005px;
  height: 29px;
  background: #fff;
  border: 1px solid #ccc;
  border-radius: 2px;
}
.nav-lib, .nav-side, .nav-shield, .nav-menu {
  top: 12px;
  width: 16px;
  height: 16px;
}
.nav-lib { left: 1724px; }
.nav-side { left: 1755px; }
.nav-shield { left: 1787px; }
.nav-menu { left: 1826px; }
.nav-divider {
  left: 1814px;
  top: 6px;
  height: 28px;
  border-left: 1px solid #d0d0d0;
}
.docs-head {
  flex: none;
  height: 92px;
  display: flex;
  align-items: center;
  justify-content: flex-end;
  gap: 30px;
  padding-right: 30px;
  background: #fff;
}
.share-btn {
  width: 120px;
  height: 50px;
  border-radius: 4px;
  background: #1a73e8;
}
.avatar {
  width: 44px;
  height: 44px;
  border-radius: 50%;
  background: #ef6c00;
  color: #fff;
  font: 24px/44px "Open Sans", sans-serif;
  text-align: center;
}
.docs-main {
  flex: 1;
  display: flex;
  min-height: 0;
}
.ruler {
  position: relative;
  flex: none;
  width: 18px;
  background:
    linear-gradient(#c9c9c9 0 1px, transparent 1px) 4px 3px / 10px 68.5px repeat-y,
    #fff;
  border-right: 1px solid #dadce0;
}
.ruler::before {
  content: "";
  position: absolute;
  left: 7px;
  top: 0;
  bottom: 0;
  width: 5px;
  background: repeating-linear-gradient(#c9c9c9 0 1px, transparent 1px 17.125px) 0 3px;
}
.ruler-num {
  position: absolute;
  left: 3px;
  width: 14px;
  height: 14px;
  background: #fff;
  color: #444;
  font: 12px/14px "Liberation Sans", sans-serif;
  text-align: center;
  transform: rotate(-90deg);
}
.ruler-4 { top: 424px; }
.ruler-5 { top: 561px; }
.ruler-6 { top: 698px; }
.ruler-7 { top: 835px; }
.docs-canvas {
  flex: 1;
  min-width: 0;
  display: flex;
  flex-direction: column;
}
.docs-bar {
  flex: none;
  height: 56px;
  display: flex;
  align-items: center;
  justify-content: flex-end;
  padding-right: 12px;
  background: #fff;
  border-top: 1px solid #e3e3e3;
}
.docs-chevron {
  width: 16px;
  height: 10px;
}
.docs-strip {
  flex: none;
  height: 19px;
  background: linear-gradient(#e8eaed, #eef0f2);
}
.docs-work {
  position: relative;
  flex: 1;
  background: #f8f9fa;
  padding-left: 265px;
}
.page {
  width: 1167px;
  height: 100%;
  background: #fff;
  box-shadow: 0 0 3px rgba(0, 0, 0, 0.12);
}
.page-text {
  margin: 0;
  padding: 723px 0 0 137px;
  color: #000;
  font: 30px/36px "Liberation Sans", sans-serif;
}
.explore {
  position: absolute;
  right: 8px;
  bottom: 11px;
  width: 52px;
  height: 52px;
  display: flex;
  align-items: center;
  justify-content: center;
  background: #fff;
  border-radius: 2px;
  box-shadow: 0 1px 4px rgba(0, 0, 0, 0.3);
}
.explore svg {
  width: 26px;
  height: 30px;
}
.docs-scroll {
  position: relative;
  flex: none;
  width: 5px;
  background: #f8f9fa;
}
.docs-scroll i {
  position: absolute;
  left: 0;
  top: 721px;
  width: 5px;
  height: 18px;
  background: #bdbdbd;
}
.docs-side {
  position: relative;
  flex: none;
  width: 80px;
  background: #fff;
  border-left: 1px solid #e3e3e3;
  border-top: 1px solid #e3e3e3;
}
.docs-side svg {
  position: absolute;
}
.side-cal { left: 29px; top: 28px; width: 22px; height: 28px; }
.side-keep { left: 29px; top: 108px; width: 22px; height: 28px; }
.side-tasks { left: 28px; top: 189px; width: 24px; height: 24px; }
.side-next { left: 36px; top: 813px; width: 8px; height: 14px; }

/* terminal */
.terminal {
  left: 67px;
  top: 27px;
  width: 733px;
  height: 488px;
  display: flex;
  flex-direction: column;
  border-radius: 4px 4px 0 0;
  overflow: hidden;
  background: #300a24;
}
.term-title {
  position: relative;
  flex: none;
  height: 28px;
  background: #3d3b36;
  color: #8c8a83;
  font: 600 14px/30px "Open Sans", sans-serif;
  text-align: center;
}
.win-btns-term {
  right: 4px;
  gap: 5px;
}
.term-menu {
  flex: none;
  height: 26px;
  display: flex;
  gap: 14px;
  padding-left: 6px;
  background: #3d3b36;
  color: #8f8d86;
  font: 14px/28px "Open Sans", sans-serif;
}
.term-body {
  flex: 1;
  padding: 2px 0 0 1px;
  color: #eeeeec;
  font: 15px/18px "DejaVu Sans Mono", monospace;
  overflow: hidden;
}
.t-line {
  display: flex;
}
.t-svc {
  width: 81px;
  color: #c4a000;
}
.t-bar {
  width: 18px;
  color: #c4a000;
}
.t-cursor {
  display: block;
  width: 11px;
  height: 19px;
  margin-left: -1px;
  border: 1px solid #eeeeec;
}

/* dark window between terminal and jmeter */
.darkwin {
  left: 439px;
  top: 85px;
  width: 886px;
  height: 18px;
  background: #3f3d39;
  border-radius: 5px 5px 0 0;
}
.dark-group {
  position: absolute;
  top: 5px;
  height: 14px;
  display: flex;
  border: 1px solid #2d2c29;
  border-radius: 3px 3px 0 0;
  background: #45433e;
}
.dark-group i {
  flex: 1;
  border-right: 1px solid #2d2c29;
}
.dark-g1 { left: 9px; width: 64px; }
.dark-g2 { left: 81px; width: 604px; }
.dark-g3 { left: 691px; width: 90px; }
.dark-dots {
  position: absolute;
  right: 8px;
  top: 6px;
  display: flex;
  gap: 8px;
}
.dark-dots i {
  width: 12px;
  height: 12px;
  border-radius: 50%;
  background: #55534e;
}

/* jmeter */
.jm {
  left: 262px;
  top: 102px;
  width: 1535px;
  height: 864px;
  display: flex;
  flex-direction: column;
  background: #eeeeee;
  border-radius: 5px 5px 0 0;
  box-shadow: 0 6px 22px rgba(0, 0, 0, 0.45);
  color: #222;
  font-size: 11.7px;
}
.jm-title {
  position: relative;
  flex: none;
  height: 30px;
  background: linear-gradient(#4d4b45, #3c3a35);
  border-radius: 5px 5px 0 0;
  color: #e6e5e1;
  font: 600 14.7px/30px "Open Sans", sans-serif;
  text-align: center;
}
.win-btns-jm {
  right: 6px;
  gap: 4px;
}
.win-btns-jm b {
  background: #6a6862;
}
.win-btns-jm .is-close {
  background: #e95420;
}
.jm-menu {
  flex: none;
  height: 20px;
  display: flex;
  align-items: center;
  gap: 12.5px;
  padding-left: 5px;
  background: linear-gradient(#fff, #e4e4e4);
  font-size: 12px;
  font-weight: bold;
}
.jm-tools {
  flex: none;
  height: 39px;
  display: flex;
  align-items: flex-start;
  gap: 10px;
  padding-left: 1px;
  background: #eeeeee;
  border-top: 1px solid #d9d9d9;
  border-bottom: 1px solid #f7f7f7;
}
.tgroup {
  display: flex;
  gap: 1px;
  background: #f7f7f7;
  padding: 1px 1px 1px 0;
}
.tbtn {
  width: 33px;
  height: 33px;
  padding: 3px;
  background: #eeeeee;
  border: 1px solid #8e8e8e;
  box-shadow: 1px 1px 0 #fff;
}
.tbtn svg {
  display: block;
  width: 25px;
  height: 25px;
}
.tbtn.off {
  border-color: #d4d4d4;
}
.jm-status {
  margin-left: auto;
  height: 36px;
  display: flex;
  align-items: center;
  font-size: 12px;
  font-weight: bold;
}
.warn {
  width: 17px;
  height: 15px;
  margin-left: 3px;
}
.thread-count {
  margin-left: 23px;
  font-size: 11.7px;
}
.thread-box {
  width: 10px;
  height: 9px;
  margin-left: 9px;
  background: #eef3f8;
  border: 1px solid #a3b3c3;
  border-right: 0;
}
.jm-split {
  flex: 1;
  min-height: 0;
  display: flex;
  border: 2px solid #7a8a99;
}
.tree-pane {
  flex: none;
  width: 274px;
  display: flex;
  flex-direction: column;
  background: #fff;
}
.tree {
  position: relative;
  flex: 1;
  min-height: 0;
  overflow: hidden;
  border-right: 1px solid #7a8a99;
}
.tree-lines {
  position: absolute;
  left: 0;
  top: 0;
}
.node {
  position: relative;
  height: 19px;
  display: flex;
  align-items: center;
  gap: 4px;
  white-space: nowrap;
}
.node svg {
  flex: none;
  width: 20px;
  height: 20px;
}
.lv1 { padding-left: 18px; }
.lv2 { padding-left: 38px; }
.lv3 { padding-left: 58px; }
.tight {
  letter-spacing: -0.25px;
}
.is-sel {
  margin-left: -1px;
  padding: 1px 0;
  line-height: 17px;
  background: #b8cfe5;
  border: 1px solid #6382bf;
}
.hscroll {
  flex: none;
  height: 15px;
  display: flex;
  border: 1px solid #7a8a99;
  border-width: 1px 1px 0;
  background: #eeeeee;
}
.hs-btn {
  flex: none;
  width: 14px;
  display: flex;
  align-items: center;
  justify-content: center;
  background: linear-gradient(#fff, #e4e4e4);
}
.hs-btn svg {
  width: 8px;
  height: 12px;
}
.hs-thumb {
  flex: none;
  width: 232px;
  display: flex;
  align-items: center;
  justify-content: center;
  background: linear-gradient(#cfdfee, #eaf1f8 40%, #c5d8ea);
  border: 1px solid #6382bf;
}
.hs-thumb i {
  width: 5px;
  height: 9px;
  border-left: 1px solid #6382bf;
  border-right: 1px solid #6382bf;
}
.hs-track {
  flex: 1;
  border-right: 1px solid #7a8a99;
}
.split-bar {
  flex: none;
  width: 10px;
  background:
    radial-gradient(circle, #7a8a99 0 .7px, transparent 1px) 4px 0 / 3px 3px repeat-y,
    #eeeeee;
}
.report {
  flex: 1;
  min-width: 0;
  display: flex;
  flex-direction: column;
  padding-left: 1px;
  border-left: 2px solid #7a8a99;
}
.report-title {
  flex: none;
  margin: 0;
  height: 34px;
  padding: 10px 0 0 10px;
  font-size: 16.1px;
  line-height: 20px;
  font-weight: bold;
}
.lbl {
  font-size: 12px;
  font-weight: bold;
  white-space: nowrap;
}
.namebox {
  flex: none;
  width: 1222px;
  height: 42px;
  margin-left: 10px;
  padding: 1px 1px 0 2px;
  border: 1px solid #8a98a6;
}
.name-row {
  display: flex;
  align-items: center;
  height: 18px;
}
.name-row .lbl {
  width: 48px;
}
.comments-row {
  height: 15px;
  margin-top: 6px;
}
.comments-row .lbl {
  width: 75px;
  flex: none;
}
.field {
  background: #fff;
  border: 1px solid #7a8a99;
  border-right-color: #eef;
  padding: 0 1px;
  font-size: 12px;
  line-height: 16px;
}
.field-name {
  flex: 1;
}
.field-plain {
  flex: 1;
  height: 15px;
  background: #fff;
}
.fileset {
  flex: none;
  width: 1218px;
  height: 45px;
  margin: 5px 0 0 12px;
  padding: 2px;
  border: 1px solid #b8cfe5;
  min-width: 0;
}
.fileset legend {
  margin-left: 2px;
  padding: 1px 1px 0;
  font-size: 12px;
  font-weight: bold;
  line-height: 15px;
}
.file-row {
  display: flex;
  align-items: center;
  height: 25px;
}
.file-row > .lbl:first-child {
  width: 67px;
}
.field-file {
  width: 661px;
  height: 24px;
  margin-right: 7px;
}
.jbtn {
  padding: 0;
  border: 1px solid #7a8a99;
  background: linear-gradient(#e9f0f7, #f6f9fc 15%, #dbe6f0 55%, #b8cfe5);
  color: #222;
  font-family: "DejaVu Sans", sans-serif;
  font-size: 12px;
  font-weight: bold;
}
.jbtn-browse {
  width: 78px;
  height: 23px;
  font-size: 9.6px;
  font-weight: normal;
}
.log-label {
  margin-left: 5px;
  width: 128px;
}
.check-wrap {
  display: flex;
  align-items: center;
  gap: 5px;
}
.errors-wrap {
  width: 71px;
}
.check {
  flex: none;
  display: block;
  width: 13px;
  height: 13px;
  border: 1px solid #7a8a99;
  background: linear-gradient(135deg, #f4f8fb, #c6d7e8);
}
.check-on {
  position: relative;
}
.check-on::after {
  content: "";
  position: absolute;
  left: 2px;
  top: 1px;
  width: 5px;
  height: 8px;
  border-right: 2px solid #222;
  border-bottom: 1px solid #222;
  transform: rotate(20deg);
}
.jbtn-config {
  width: 100px;
  height: 25px;
  margin-left: auto;
  margin-right: -1px;
}
.table-wrap {
  flex: 1;
  min-height: 0;
  margin-top: 9px;
  border-left: 1px solid #7a8a99;
  border-right: 2px solid #7a8a99;
  border-bottom: 1px solid #7a8a99;
}
.results {
  width: 1240px;
  table-layout: fixed;
  border-collapse: collapse;
  font-size: 11.7px;
  color: #222;
}
.results th {
  height: 18px;
  padding: 0 0 0 3px;
  font-weight: normal;
  background: #eeeeee;
  border: 1px solid #7a8a99;
  border-left: 0;
  box-shadow: inset 1px 1px 0 #fff;
}
.results td {
  height: 16px;
  padding: 1px 1px 0 0;
  background: #fff;
  text-align: right;
  line-height: 14px;
  border: 1px solid #7a8a99;
  border-left: 0;
  border-top: 0;
}
.results td:first-child {
  padding-left: 1px;
  text-align: left;
}
.report-foot {
  flex: none;
  height: 37px;
  display: flex;
  align-items: center;
  padding-left: 361px;
}
.foot-label {
  margin-left: 4px;
  font-size: 12.1px;
}
.jbtn-save {
  width: 144px;
  height: 24px;
  margin: 0 9px 0 9px;
}
```
